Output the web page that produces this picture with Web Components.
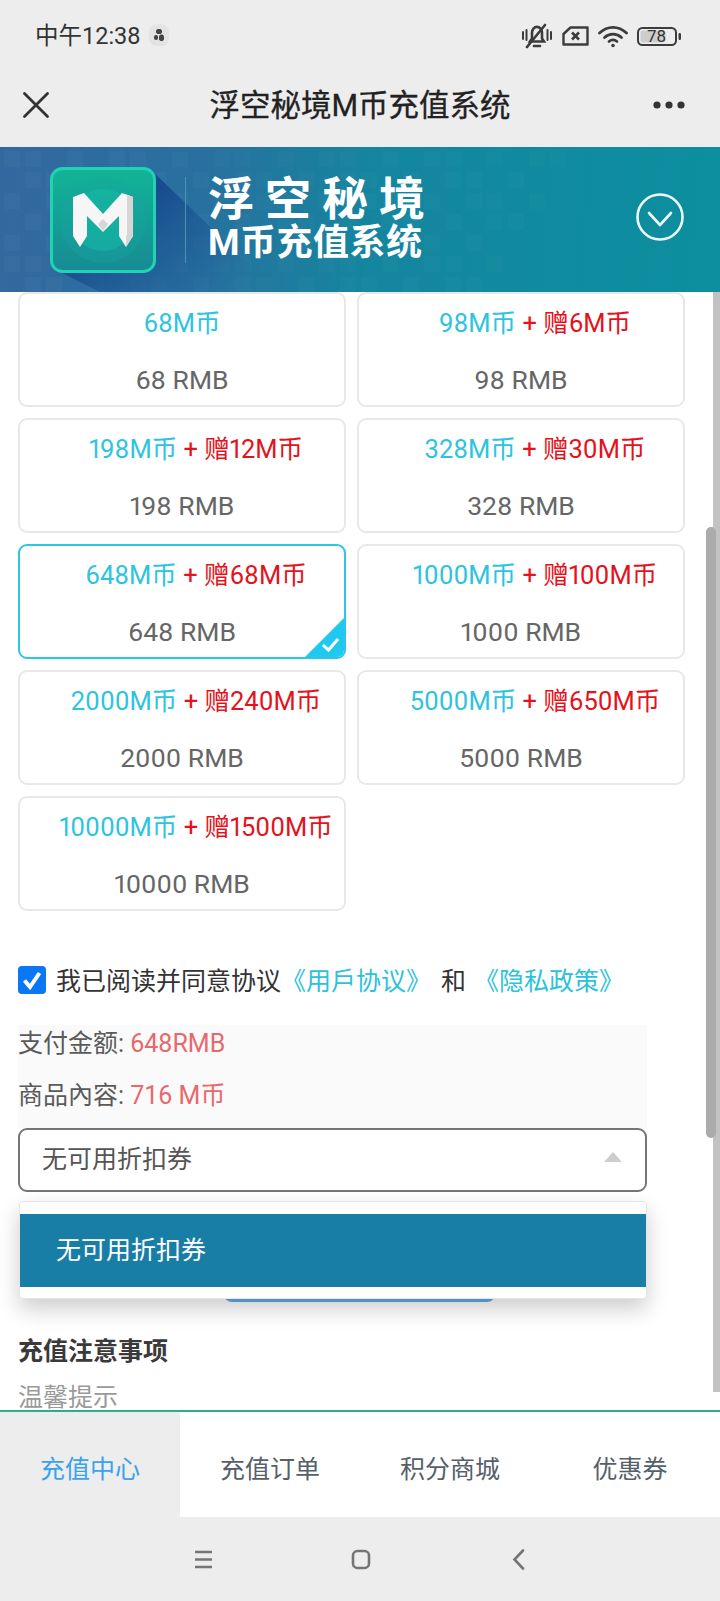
<!DOCTYPE html>
<html lang="zh">
<head>
<meta charset="utf-8">
<title>浮空秘境M币充值系统</title>
<style>
  html, body { margin: 0; padding: 0; background: #fff; }
  body { width: 720px; height: 1601px; overflow: hidden; font-family: Roboto, "Noto Sans CJK SC", sans-serif; }
</style>
</head>
<body>
<recharge-app></recharge-app>
<script>
const FONT = 'Roboto, "Noto Sans CJK SC", sans-serif'

class StatusBar extends HTMLElement {
  constructor() {
    super()
    this.attachShadow({ mode: 'open' })
    this.shadowRoot.innerHTML = `
      <style>
        :host { display: flex; align-items: center; height: 72px; box-sizing: border-box; padding: 0 39px 0 35px; background: #ededed; color: #333; font: 23.500px ${FONT}; }
        #time { margin-bottom: 4px; }
        #chip { display: flex; margin-left: 8px; margin-bottom: 2px; }
        #icons { display: flex; align-items: center; margin-left: auto; }
        #battery { position: relative; display: flex; margin-left: 9px; }
        #battery span { position: absolute; left: 0; right: 5px; top: 0; text-align: center; font-size: 17px; line-height: 19px; }
      </style>
      <span id="time">中午12:38</span>
      <svg id="chip" width="20" height="22" viewBox="0 0 20 22">
        <rect width="20" height="22" rx="8" fill="#e3e3e3"/>
        <g fill="#444" stroke="#444" stroke-width="1"><rect x="7.500" y="5.500" width="5" height="4" rx="1.500"/><rect x="5.500" y="11.500" width="3" height="4" rx="1"/><rect x="10.500" y="11" width="4" height="5.500" rx="1.500"/></g>
      </svg>
      <div id="icons">
        <svg width="30" height="26" viewBox="0 0 30 26" fill="none" stroke="#3c3c3c" stroke-width="2.600" stroke-linecap="round">
          <path d="M8 18.500h14l-2-3v-6c0-3-2.200-5.600-5-5.600s-5 2.600-5 5.600v6z"/>
          <path d="M12 23h6"/>
          <path d="M5 24L23 2"/>
          <path d="M1 9v7M4.500 7v10M25.500 7v10M29 9v7" stroke-width="2"/>
        </svg>
        <svg width="27" height="20" viewBox="0 0 27 20" style="margin-left: 10px" fill="none" stroke="#3c3c3c" stroke-width="2.400" stroke-linejoin="round">
          <path d="M8.500 1.500H25.500V18.500H1.500V8z"/>
          <path d="M10 6.500l7 7M17 6.500l-7 7" stroke-width="2.600"/>
        </svg>
        <svg width="30" height="23" viewBox="0 0 30 23" style="margin-left: 9px" fill="none" stroke="#3c3c3c" stroke-width="2.800" stroke-linecap="round">
          <path d="M1.500 8c8-7.500 19-7.500 27 0"/>
          <path d="M6.500 12.500c5-4.500 12-4.500 17 0"/>
          <path d="M11 16.500c2.500-2 5.500-2 8 0"/>
          <circle cx="15" cy="20.500" r="1.800" fill="#3c3c3c" stroke="none"/>
        </svg>
        <div id="battery">
          <svg width="44" height="19" viewBox="0 0 44 19">
            <rect x="1" y="1" width="38" height="17" rx="4.500" fill="none" stroke="#3c3c3c" stroke-width="2"/>
            <rect x="3.500" y="3.500" width="25" height="12" rx="2" fill="#cdcdcd"/>
            <rect x="41.500" y="6" width="2.500" height="7" rx="1.200" fill="#3c3c3c"/>
          </svg>
          <span>78</span>
        </div>
      </div>`
  }
}

class NavHeader extends HTMLElement {
  constructor() {
    super()
    this.attachShadow({ mode: 'open' })
    this.shadowRoot.innerHTML = `
      <style>
        :host { display: grid; grid-template-columns: 1fr auto 1fr; align-items: center; height: 75px; box-sizing: border-box; padding: 0 35px 10px; background: #ededed; color: #222; }
        h1 { margin: 0 0 3px; font: 400 30.500px ${FONT}; -webkit-text-stroke: 0.300px #222; }
        #close { margin-left: -12px; }
        #more { justify-self: end; }
      </style>
      <svg id="close" width="26" height="26" viewBox="0 0 26 26" stroke="#333" stroke-width="2.800" stroke-linecap="round"><path d="M1.500 1.500l23 23M24.500 1.500l-23 23"/></svg>
      <h1><slot></slot></h1>
      <svg id="more" width="32" height="8" viewBox="0 0 32 8" fill="#333"><circle cx="4" cy="4" r="3.600"/><circle cx="16" cy="4" r="3.600"/><circle cx="28" cy="4" r="3.600"/></svg>`
  }
}

class PromoBanner extends HTMLElement {
  constructor() {
    super()
    this.attachShadow({ mode: 'open' })

    /* Faint squares behind the logo and the title */
    var squares = ''
    for (var y = 4; y < 145; y += 21) {
      for (var x = 4; x < 560; x += 21) {
        if ((x * 7 + y * 3) % 5 < 3 && x + y * 0.6 < 560) {
          squares += `<rect x="${x}" y="${y}" width="16" height="16" fill="#fff" opacity="${x < 200 ? 0.028 : 0.018}"/>`
        }
      }
    }

    this.shadowRoot.innerHTML = `
      <style>
        :host { position: relative; display: flex; align-items: center; height: 145px; box-sizing: border-box; padding-left: 50px; padding-right: 36px; overflow: hidden; color: #fff;
          background: linear-gradient(96deg, #33689f 0, #28709f 28%, #14869f 52%, #0c8f9f 100%); }
        #decor { position: absolute; left: 0; top: 0; }
        #logo, #text, #toggle { position: relative; }
        #logo { display: block; margin-top: 1px; }
        #text { margin-left: 29px; padding: 0 0 2px 22px; height: 86px; box-sizing: border-box; display: flex; flex-direction: column; justify-content: center; border-left: 1px solid #4c93b3; font-family: ${FONT}; font-weight: 700; }
        #line1 { font-size: 46px; line-height: 50px; letter-spacing: 11px; white-space: nowrap; }
        #line2 { font-size: 36px; line-height: 40px; letter-spacing: 0.500px; white-space: nowrap; margin-top: -1px; }
        #toggle { margin-left: auto; margin-bottom: 6px; }
      </style>
      <svg id="decor" width="720" height="145" viewBox="0 0 720 145">
        <defs>
          <linearGradient id="fall" x1="0.350" y1="0.350" x2="1" y2="0.900">
            <stop offset="0" stop-color="#174a8e" stop-opacity="0.950"/>
            <stop offset="0.500" stop-color="#1c5a94" stop-opacity="0.600"/>
            <stop offset="1" stop-color="#1f6398" stop-opacity="0"/>
          </linearGradient>
        </defs>
        ${squares}
        <path d="M150 22L250 118V145H100L62 126z" fill="url(#fall)"/>
      </svg>
      <svg id="logo" width="106" height="106" viewBox="0 0 106 106">
        <defs>
          <linearGradient id="face" x1="0" y1="0" x2="0" y2="1">
            <stop offset="0" stop-color="#12b596"/>
            <stop offset="1" stop-color="#178a95"/>
          </linearGradient>
        </defs>
        <rect x="1.500" y="1.500" width="103" height="103" rx="11" fill="url(#face)" stroke="#1fd3b3" stroke-width="3"/>
        <circle cx="53" cy="53" r="43" fill="#18a6a0" opacity="0.350"/>
        <circle cx="53" cy="53" r="31" fill="#17bfa9" opacity="0.450"/>
        <path d="M23 30l11-4 19 21 19-21 11 4v39l-7 11-7-11V49L53 65 37 49v20l-7 11-7-11z" fill="#f6f6f6"/>
        <path d="M77 27.500l6 2.500v39l-7 11v-11l1-1zM53 52l5 5-5 7-5-7z" fill="#d9d5d5"/>
      </svg>
      <div id="text"><div id="line1">浮空秘境</div><div id="line2">M币充值系统</div></div>
      <svg id="toggle" width="48" height="48" viewBox="0 0 48 48" fill="none" stroke="#eef8fa" stroke-width="2.600" stroke-linecap="round" stroke-linejoin="round">
        <circle cx="24" cy="24" r="22.500"/>
        <path d="M13 20l11 12 11-12"/>
      </svg>`
  }
}

class CoinCard extends HTMLElement {
  constructor() {
    super()
    this.attachShadow({ mode: 'open' })
  }

  connectedCallback() {
    var bonus = this.getAttribute('bonus')
    var selected = this.hasAttribute('selected')
    var extra = bonus ? `<span class="plus"> + </span><span class="gift">赠${bonus}M币</span>` : ''

    this.shadowRoot.innerHTML = `
      <style>
        :host { position: relative; display: block; height: 115px; box-sizing: border-box; border: 2px solid ${selected ? '#2cc6e6' : '#e8e8e8'}; border-radius: 9px; background: #fff; overflow: hidden; text-align: center; font: 25.500px ${FONT}; font-variant-numeric: proportional-nums; }
        #title { height: 54px; line-height: 58px; white-space: nowrap; color: #2cc4de; ${bonus ? 'padding-left: 28px;' : ''} }
        .gift, .plus { color: #e5121c; }
        .plus { white-space: pre; }
        #price { height: 57px; line-height: 64px; font-size: 26.500px; color: #666; }
        #tick { position: absolute; right: 0; bottom: 0; display: block; }
      </style>
      <div id="title">${this.getAttribute('coins')}M币${extra}</div>
      <div id="price">${this.getAttribute('coins')} RMB</div>
      ${selected ? `<svg id="tick" width="39" height="39" viewBox="0 0 39 39"><path d="M39 0V39H0z" fill="#1fc8ee"/><path d="M18 27l5.500 5L33 21" fill="none" stroke="#fff" stroke-width="3"/></svg>` : ''}`
  }
}

class AgreeRow extends HTMLElement {
  constructor() {
    super()
    this.attachShadow({ mode: 'open' })
    this.shadowRoot.innerHTML = `
      <style>
        :host { display: flex; align-items: center; height: 28px; font: 25px ${FONT}; color: #333; white-space: pre; }
        svg { margin-right: 10px; flex: none; }
        #line { margin-bottom: 3px; }
        #and { margin: 0 8px 0 10px; }
        a { color: #2cc2da; text-decoration: none; }
      </style>
      <svg width="28" height="28" viewBox="0 0 28 28">
        <rect width="28" height="28" rx="4" fill="#0a78f5"/>
        <path d="M6.500 14.500l5.500 6.500 9.500-14" fill="none" stroke="#fff" stroke-width="4"/>
      </svg>
      <span id="line">我已阅读并同意协议<a>《用戶协议》</a><span id="and">和</span><a>《隐私政策》</a></span>`
  }
}

class PayPanel extends HTMLElement {
  constructor() {
    super()
    this.attachShadow({ mode: 'open' })
    this.shadowRoot.innerHTML = `
      <style>
        :host { display: block; width: 629px; height: 103px; background: #fafafa; font: 25px ${FONT}; color: #5a5a5a; }
        div { height: 52px; line-height: 38px; }
        b { font-weight: 400; color: #e8686e; }
      </style>
      <div>支付金额: <b>648RMB</b></div>
      <div>商品內容: <b>716 M币</b></div>`
  }
}

class CouponSelect extends HTMLElement {
  constructor() {
    super()
    this.attachShadow({ mode: 'open' })
    this.shadowRoot.innerHTML = `
      <style>
        :host { position: relative; display: block; width: 629px; font: 25px ${FONT}; }
        #box { display: flex; align-items: center; justify-content: space-between; height: 64px; box-sizing: border-box; padding: 0 23px 6px 22px; border: 2px solid #757575; border-radius: 9px; background: #fff; color: #555; }
        #caret { width: 0; height: 0; border: 9px solid transparent; border-top: 0; border-bottom: 10px solid #cdcdcd; }
        #menu { position: absolute; left: 1px; right: 0; top: 73px; height: 98px; box-sizing: border-box; padding-top: 12px; border: 1px solid #e6e6e6; border-radius: 4px; background: #fff; box-shadow: 0 10px 22px rgba(0, 0, 0, 0.2); }
        #option { display: flex; align-items: center; height: 73px; box-sizing: border-box; padding: 0 0 5px 36px; background: #197ea6; color: #fff; }
      </style>
      <div id="box"><span>无可用折扣券</span><i id="caret"></i></div>
      <div id="menu"><div id="option">无可用折扣券</div></div>`
  }
}

class RechargeNotes extends HTMLElement {
  constructor() {
    super()
    this.attachShadow({ mode: 'open' })
    this.shadowRoot.innerHTML = `
      <style>
        :host { display: block; font: 25px ${FONT}; }
        h2 { margin: 0; font: 700 25px/40px ${FONT}; color: #3a3a3a; }
        p { margin: 6px 0 0; line-height: 40px; color: #9a9a9a; }
      </style>
      <h2>充值注意事项</h2>
      <p>温馨提示</p>`
  }
}

class TabBar extends HTMLElement {
  constructor() {
    super()
    this.attachShadow({ mode: 'open' })
    this.shadowRoot.innerHTML = `
      <style>
        :host { display: grid; grid-template-columns: repeat(4, 180px); height: 107px; box-sizing: border-box; border-top: 2px solid #2fab92; background: #fff; font: 25px ${FONT}; color: #566069; }
        div { display: flex; align-items: center; justify-content: center; padding-top: 5px; }
        .on { background: #ededed; color: #3ba2ec; }
      </style>
      <div class="on">充值中心</div>
      <div>充值订单</div>
      <div>积分商城</div>
      <div>优惠券</div>`
  }
}

class SystemNav extends HTMLElement {
  constructor() {
    super()
    this.attachShadow({ mode: 'open' })
    this.shadowRoot.innerHTML = `
      <style>
        :host { display: flex; height: 84px; box-sizing: border-box; padding: 32px 0 0 194px; background: #ededed; }
        svg { display: block; }
      </style>
      <svg width="340" height="22" viewBox="0 0 340 22" fill="none" stroke="#757575" stroke-width="2.600">
        <path d="M1 3h17M1 10.500h17M1 18h17"/>
        <rect x="159" y="2" width="16" height="17" rx="4.500"/>
        <path d="M329 1.500l-8.500 9 8.500 9" stroke-linecap="round"/>
      </svg>`
  }
}

class RechargeApp extends HTMLElement {
  constructor() {
    super()
    this.attachShadow({ mode: 'open' })
    this.shadowRoot.innerHTML = `
      <style>
        :host { display: flex; flex-direction: column; width: 720px; height: 1601px; }
        #content { position: relative; flex: 1; min-height: 0; overflow: hidden; box-sizing: border-box; padding-left: 18px; }
        #grid { display: grid; grid-template-columns: repeat(2, 328px); gap: 11px; }
        agree-row { margin-top: 55px; }
        pay-panel { margin-top: 31px; }
        #pay { display: block; width: 271px; height: 56px; margin: 54px 0 0 206px; border-radius: 8px; background: #62ade6; }
        recharge-notes { margin-top: 30px; }
        #track { position: absolute; right: 0; top: 0; bottom: 18px; width: 7px; background: #c2c2c2; }
        #thumb { position: absolute; left: 706px; top: 235px; width: 10px; height: 611px; border-radius: 5px; background: #ababab; }
      </style>
      <status-bar></status-bar>
      <nav-header>浮空秘境M币充值系统</nav-header>
      <promo-banner></promo-banner>
      <div id="content">
        <div id="grid">
          <coin-card coins="68"></coin-card>
          <coin-card coins="98" bonus="6"></coin-card>
          <coin-card coins="198" bonus="12"></coin-card>
          <coin-card coins="328" bonus="30"></coin-card>
          <coin-card coins="648" bonus="68" selected></coin-card>
          <coin-card coins="1000" bonus="100"></coin-card>
          <coin-card coins="2000" bonus="240"></coin-card>
          <coin-card coins="5000" bonus="650"></coin-card>
          <coin-card coins="10000" bonus="1500"></coin-card>
        </div>
        <agree-row></agree-row>
        <pay-panel></pay-panel>
        <coupon-select></coupon-select>
        <div id="pay"></div>
        <recharge-notes></recharge-notes>
        <div id="track"></div>
        <div id="thumb"></div>
      </div>
      <tab-bar></tab-bar>
      <system-nav></system-nav>`
  }
}

window.customElements.define('status-bar', StatusBar)
window.customElements.define('nav-header', NavHeader)
window.customElements.define('promo-banner', PromoBanner)
window.customElements.define('coin-card', CoinCard)
window.customElements.define('agree-row', AgreeRow)
window.customElements.define('pay-panel', PayPanel)
window.customElements.define('coupon-select', CouponSelect)
window.customElements.define('recharge-notes', RechargeNotes)
window.customElements.define('tab-bar', TabBar)
window.customElements.define('system-nav', SystemNav)
window.customElements.define('recharge-app', RechargeApp)
</script>
</body>
</html>
